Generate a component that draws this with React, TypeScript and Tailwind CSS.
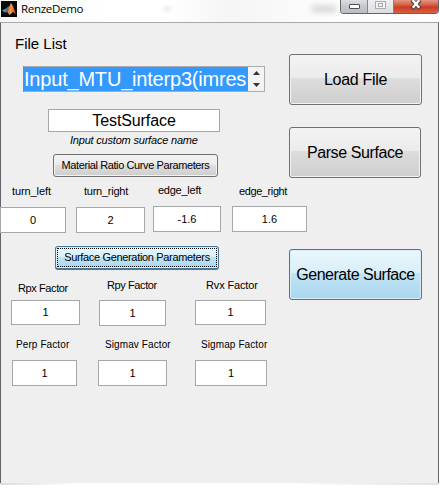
import type { ReactNode } from "react";

function Field({ className, children }: { className: string; children: ReactNode }) {
  return (
    <div className={`flex shrink-0 items-center justify-center border border-[#a5a7ab] bg-white ${className}`}>
      {children}
    </div>
  );
}

function Label({ className, children }: { className: string; children: ReactNode }) {
  return <span className={`h-4 shrink-0 whitespace-nowrap leading-4 ${className}`}>{children}</span>;
}

const grey =
  "border-[#707070] bg-[linear-gradient(#f3f3f3_0%,#ebebeb_47%,#dddddd_48%,#cecece_100%)] shadow-[inset_0_0_0_1px_#f3f3f3]";
const blue =
  "border-[#44779c] bg-[linear-gradient(#eaf6fc_0%,#d8eff9_47%,#c2e4f5_48%,#a9d6ee_100%)] shadow-[inset_0_0_0_1px_#d9f0fb]";

function Button({ className, children }: { className: string; children: ReactNode }) {
  return (
    <button className={`flex shrink-0 items-center justify-center whitespace-nowrap rounded-[3px] border ${className}`}>
      {children}
    </button>
  );
}

function MatlabLogo() {
  return (
    <svg className="ml-px mt-px h-4 w-4 shrink-0" viewBox="0 0 16 16">
      <defs>
        <linearGradient id="peak" x1="0" x2="1">
          <stop offset="0" stopColor="#6b1c12" />
          <stop offset=".5" stopColor="#f0a35a" />
          <stop offset="1" stopColor="#c63a16" />
        </linearGradient>
        <linearGradient id="base" x1="0" x2="1">
          <stop offset="0" stopColor="#5bb3cf" />
          <stop offset="1" stopColor="#2c6684" />
        </linearGradient>
      </defs>
      <rect width="16" height="16" fill="#080808" />
      <path d="M1 9.5 5 7.5 7.5 5 8.5 6 6 11 4 11.5Z" fill="url(#base)" />
      <path d="M4 11.5 6.5 9 10 2 12 5 15 13 12 11 8.5 14 7 11.5Z" fill="url(#peak)" />
      <path d="M10 2 9.5 9 8.5 14 7 11.5Z" fill="#e9874b" />
    </svg>
  );
}

function TitleBar() {
  return (
    <header className="flex h-[22px] items-start bg-[linear-gradient(90deg,#f6f6f6,#fff_25%,#fff_38%,#f5f5f5_52%,#fdfdfd_75%,#fff)]">
      <MatlabLogo />
      <span className="ml-1 mt-px w-[64px] whitespace-nowrap font-['Open_Sans',sans-serif] text-[11.5px] leading-4 tracking-[-0.3px]">
        RenzeDemo
      </span>
      <span className="ml-[78px] mt-[7px] h-1 w-2 rounded-full bg-[#e4e4e4] blur-[2px]" />
      <span className="ml-[141px] mt-[6px] h-1.5 w-6 bg-[#cfcfcf] blur-[3px]" />
      <div className="ml-auto mr-[1px] flex h-[14px] w-[99px] shrink-0 overflow-hidden rounded-b-[4px] border border-t-0 border-[#606368]">
        <div className="flex w-[27px] justify-center border-r border-[#85878c] bg-[linear-gradient(#dedfe2_0%,#c7c9cd_45%,#b9bcc1_100%)]">
          <span className="mt-1 h-[5px] w-[11px] rounded-[1px] border border-[#4d5058] bg-white" />
        </div>
        <div className="flex w-[26px] justify-center border-r border-[#85878c] bg-[linear-gradient(#eeeeef_0%,#dcdddf_100%)]">
          <span className="mt-px flex h-2 w-[11px] items-center justify-center border border-[#aaaab0] bg-[#f2f2f2]">
            <span className="h-1 w-[5px] border border-[#aaaab0]" />
          </span>
        </div>
        <div className="flex flex-1 justify-center bg-[linear-gradient(#e39784_0%,#d7634b_35%,#c93d24_55%,#d9603f_100%)]">
          <svg className="h-[10px] w-[12px]" viewBox="0 0 12 10">
            <path d="M2 0 10 8.6M10 0 2 8.6" stroke="#51404a" strokeWidth="4.2" />
            <path d="M2.6 0 9.2 7.8M9.4 0 2.8 7.8" stroke="#fff" strokeWidth="2.4" />
          </svg>
        </div>
      </div>
    </header>
  );
}

export default function App() {
  return (
    <div className="flex h-[488px] w-[440px] flex-col overflow-hidden bg-white font-['Liberation_Sans',Arial,sans-serif] text-[11px] text-black">
      <TitleBar />
      <main className="mr-px flex h-[461px] shrink-0 border-x border-t border-x-[#62646a] border-t-[#a8a8a8] bg-[#efefef]">
        <section className="-ml-px flex w-[308px] shrink-0 flex-col items-start">
          <Label className="ml-[15px] mt-[13px] text-[15px]">File List</Label>
          <div className="ml-[23px] mt-[14px] flex h-[26px] w-[242px] border border-[#aaacaf] border-l-[#3399ff]">
            <div className="w-[224px] shrink-0 whitespace-nowrap bg-[#3399ff] text-[20px] leading-6 tracking-[-0.2px] text-white">
              Input_MTU_interp3(imres
            </div>
            <div className="flex flex-1 flex-col items-center justify-between bg-[#f3f3f3] py-1">
              <svg className="h-1 w-[7px]" viewBox="0 0 7 4"><path d="M3.5 0 7 4H0Z" fill="#333" /></svg>
              <svg className="h-1 w-[7px]" viewBox="0 0 7 4"><path d="M0 0H7L3.5 4Z" fill="#333" /></svg>
            </div>
          </div>
          <Field className="ml-[48px] mt-[17px] h-[23px] w-[172px] text-[16px] leading-5 tracking-[-0.1px]">TestSurface</Field>
          <Label className="ml-[70px] text-[11px] italic tracking-[-0.2px]">Input custom surface name</Label>
          <Button className={`ml-[53px] mt-[6px] h-[23px] w-[165px] text-[11px] tracking-[-0.4px] ${grey}`}>Material Ratio Curve Parameters</Button>
          <div className="flex h-[56px] items-start pt-[6px]">
            <div className="w-[76px]">
              <Label className="ml-3 block tracking-[-0.1px]">turn_left</Label>
              <Field className="mt-[8px] h-[26px] w-[66px]">0</Field>
            </div>
            <div className="w-[77px]">
              <Label className="ml-2 block tracking-[-0.25px]">turn_right</Label>
              <Field className="mt-[8px] h-[26px] w-[69px]">2</Field>
            </div>
            <div className="-mt-px w-[79px]">
              <Label className="ml-[5px] block tracking-[-0.25px]">edge_left</Label>
              <Field className="mt-[8px] h-[26px] w-[68px]">-1.6</Field>
            </div>
            <div className="w-[76px]">
              <Label className="ml-[7px] block tracking-[-0.4px]">edge_right</Label>
              <Field className="mt-[7px] h-[26px] w-[75px]">1.6</Field>
            </div>
          </div>
          <Button className={`ml-[55px] mt-[13px] h-6 w-[164px] border-b-2 text-[11px] ${blue}`}>
            <span className="flex h-[19px] w-[160px] items-center justify-center border border-dotted border-black tracking-[-0.33px]">
              Surface Generation Parameters
            </span>
          </Button>
          <div className="flex h-[56px] items-start pl-[11px] pt-[7px]">
            <div className="w-[88px] pt-[3px]">
              <Label className="ml-[7px] block tracking-[-0.4px]">Rpx Factor</Label>
              <Field className="mt-1 h-[25px] w-[69px]">1</Field>
            </div>
            <div className="w-[96px]">
              <Label className="ml-2 block tracking-[-0.4px]">Rpy Factor</Label>
              <Field className="mt-[7px] h-[26px] w-[67px]">1</Field>
            </div>
            <div>
              <Label className="ml-[11px] block tracking-[-0.15px]">Rvx Factor</Label>
              <Field className="mt-[7px] h-[25px] w-[71px]">1</Field>
            </div>
          </div>
          <div className="flex items-start pl-3 pt-[11px]">
            <div className="w-[86px]">
              <Label className="ml-1 block text-[10px] tracking-[0.1px]">Perp Factor</Label>
              <Field className="mt-[7px] h-[26px] w-[65px]">1</Field>
            </div>
            <div className="w-[97px]">
              <Label className="ml-[7px] block text-[10px] tracking-[0.1px]">Sigmav Factor</Label>
              <Field className="mt-[7px] h-[26px] w-[69px]">1</Field>
            </div>
            <div>
              <Label className="ml-[6px] block text-[10px] tracking-[0.1px]">Sigmap Factor</Label>
              <Field className="mt-[7px] h-[26px] w-[72px]">1</Field>
            </div>
          </div>
        </section>
        <aside className="-ml-[19px] flex flex-col items-start pt-[31px] text-[16px]">
          <Button className={`h-[51px] w-[133px] tracking-[-0.3px] ${grey}`}>Load File</Button>
          <Button className={`mt-[22px] h-[51px] w-[132px] tracking-[-0.4px] ${grey}`}>Parse Surface</Button>
          <Button className={`mt-[71px] h-[51px] w-[133px] tracking-[-0.5px] ${blue}`}>Generate Surface</Button>
        </aside>
      </main>
      <footer className="h-[2px] w-[439px] shrink-0 bg-[linear-gradient(90deg,#ddd,#fff_18%,#fff_65%,#e2e2e4)]" />
    </div>
  );
}
